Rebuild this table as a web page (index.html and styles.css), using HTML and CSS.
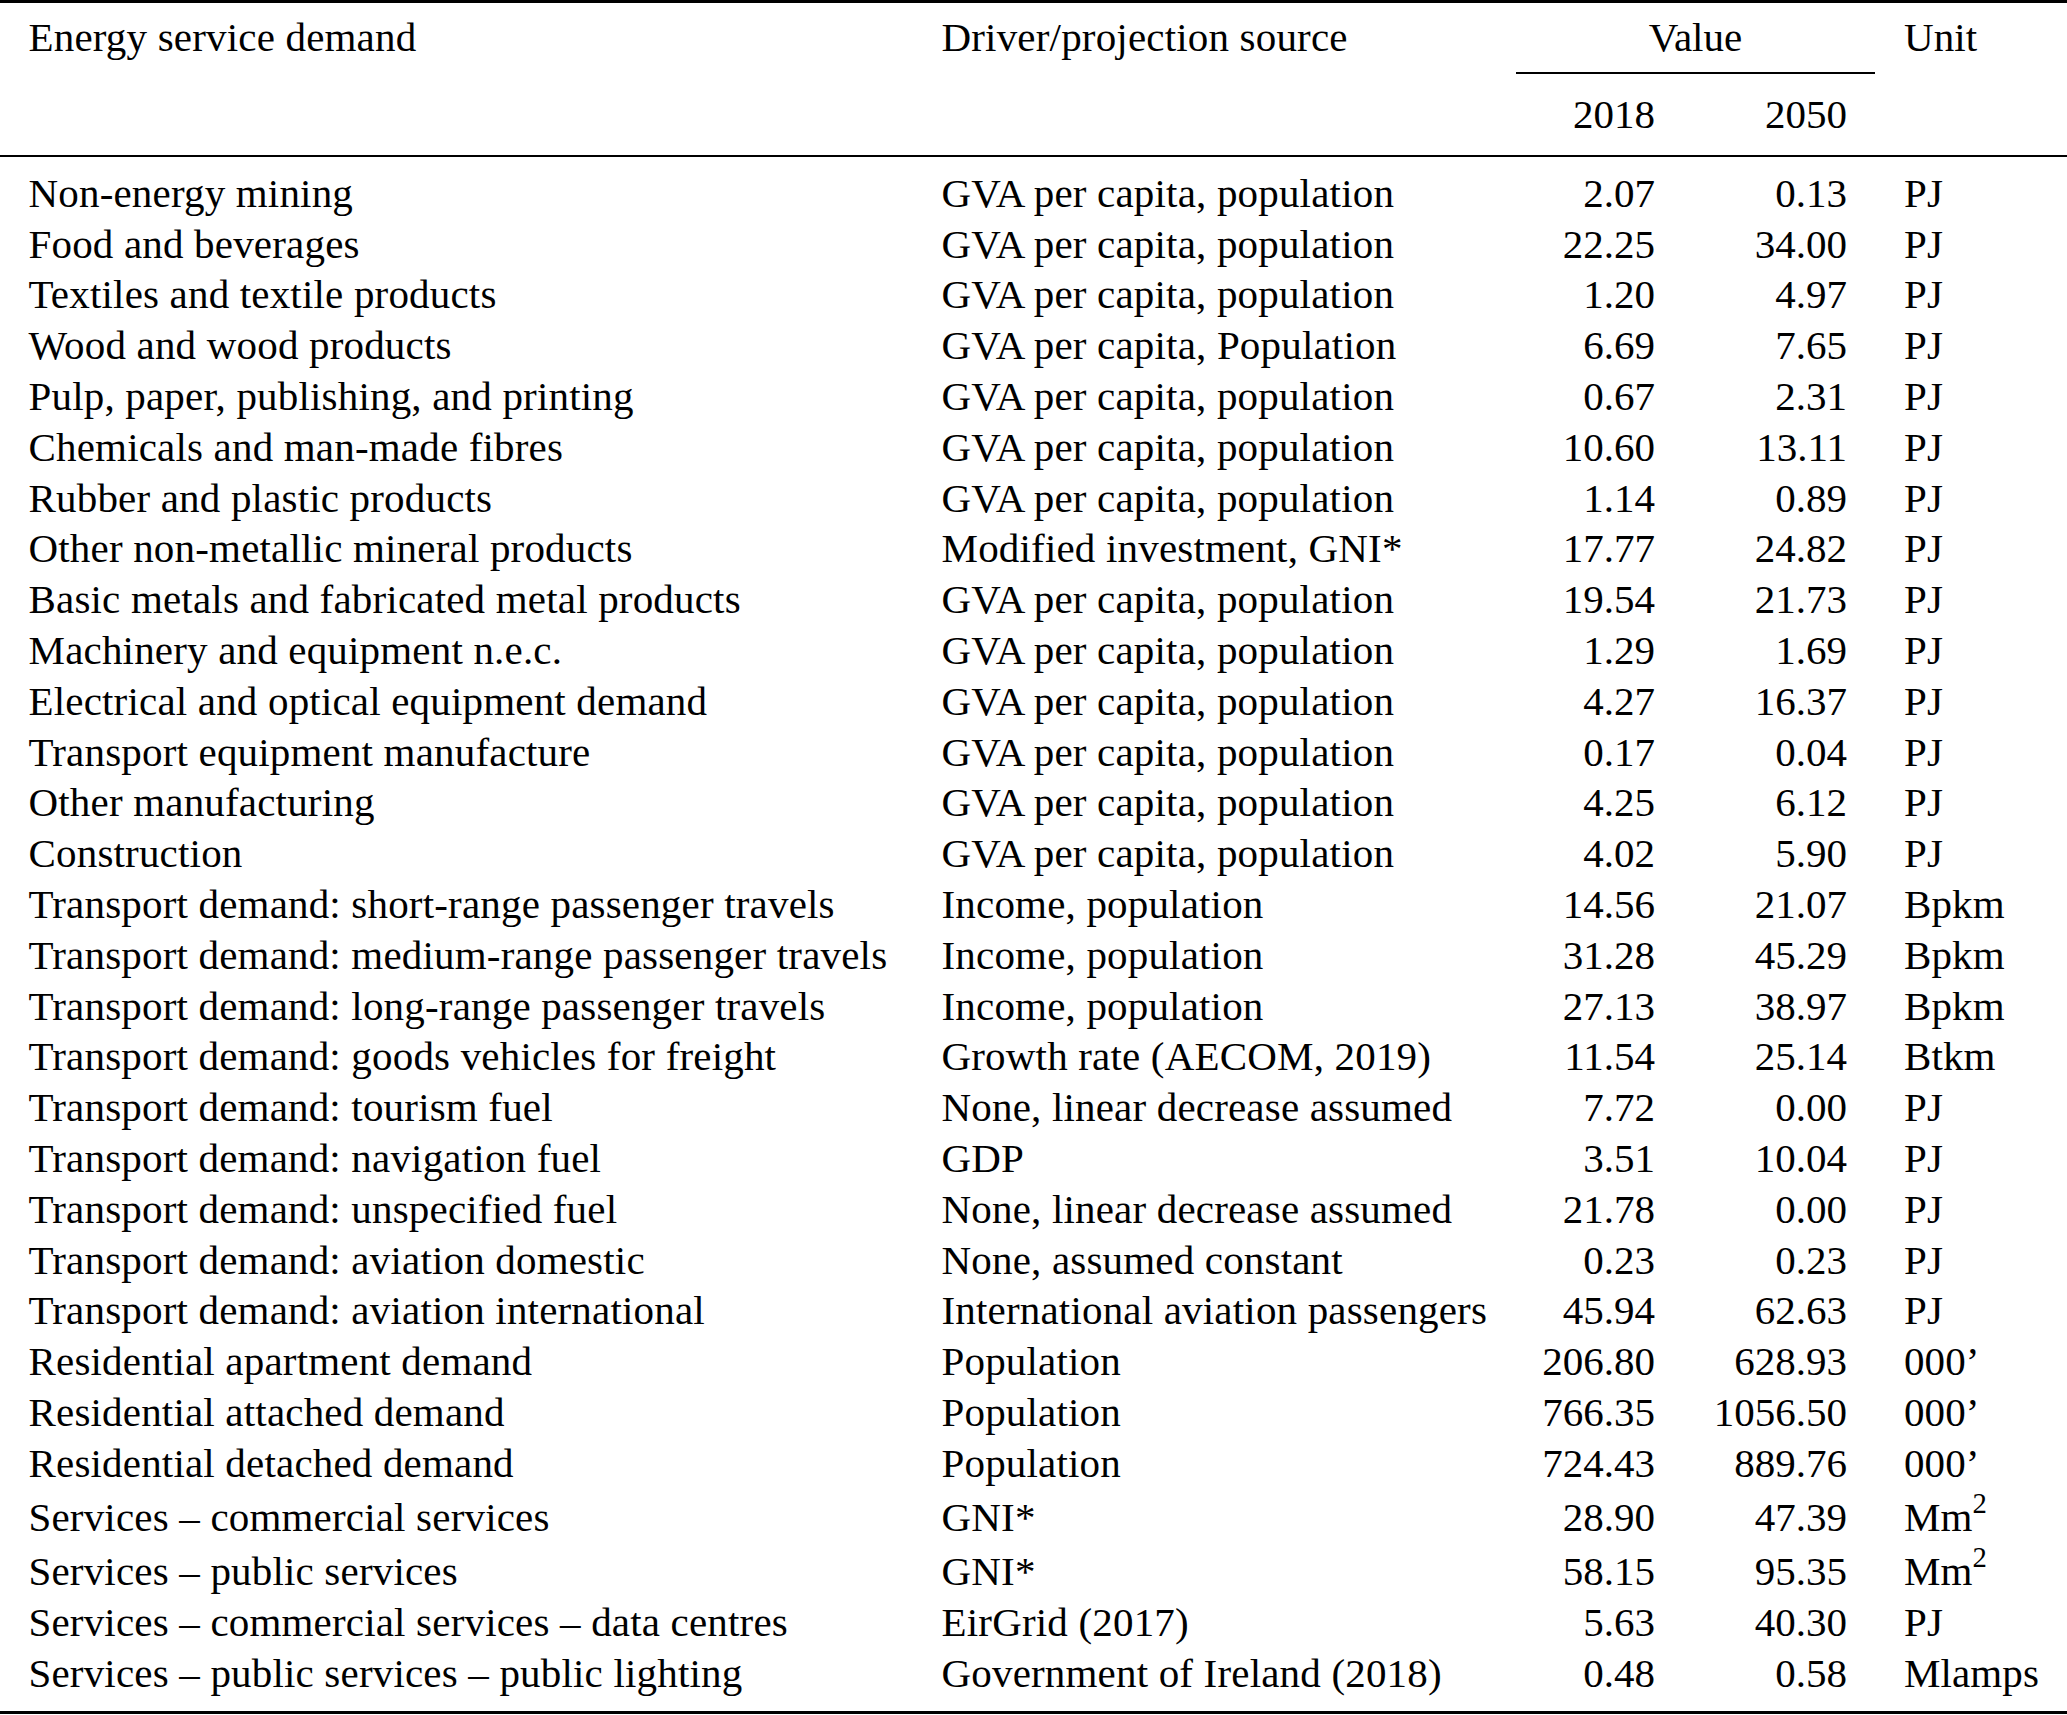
FILE: index.html
```html
<!DOCTYPE html>
<html lang="en">
<head>
<meta charset="utf-8">
<title>Energy service demand</title>
<link rel="stylesheet" href="styles.css">
</head>
<body>
<table class="tbl">
  <colgroup>
    <col class="w1"><col class="w2"><col class="w3"><col class="w4"><col class="w5">
  </colgroup>
  <thead>
    <tr class="h1">
      <th rowspan="2" class="c1 span">Energy service demand</th>
      <th rowspan="2" class="c2 span">Driver/projection source</th>
      <th colspan="2" class="value">Value</th>
      <th rowspan="2" class="c5 span">Unit</th>
    </tr>
    <tr class="h2">
      <th class="num">2018</th>
      <th class="num">2050</th>
    </tr>
  </thead>
  <tbody>
    <tr><td class="c1">Non-energy mining</td><td class="c2">GVA per capita, population</td><td class="num">2.07</td><td class="num">0.13</td><td class="c5">PJ</td></tr>
    <tr><td class="c1">Food and beverages</td><td class="c2">GVA per capita, population</td><td class="num">22.25</td><td class="num">34.00</td><td class="c5">PJ</td></tr>
    <tr><td class="c1">Textiles and textile products</td><td class="c2">GVA per capita, population</td><td class="num">1.20</td><td class="num">4.97</td><td class="c5">PJ</td></tr>
    <tr><td class="c1">Wood and wood products</td><td class="c2">GVA per capita, Population</td><td class="num">6.69</td><td class="num">7.65</td><td class="c5">PJ</td></tr>
    <tr><td class="c1">Pulp, paper, publishing, and printing</td><td class="c2">GVA per capita, population</td><td class="num">0.67</td><td class="num">2.31</td><td class="c5">PJ</td></tr>
    <tr><td class="c1">Chemicals and man-made fibres</td><td class="c2">GVA per capita, population</td><td class="num">10.60</td><td class="num">13.11</td><td class="c5">PJ</td></tr>
    <tr><td class="c1">Rubber and plastic products</td><td class="c2">GVA per capita, population</td><td class="num">1.14</td><td class="num">0.89</td><td class="c5">PJ</td></tr>
    <tr><td class="c1">Other non-metallic mineral products</td><td class="c2">Modified investment, GNI*</td><td class="num">17.77</td><td class="num">24.82</td><td class="c5">PJ</td></tr>
    <tr><td class="c1">Basic metals and fabricated metal products</td><td class="c2">GVA per capita, population</td><td class="num">19.54</td><td class="num">21.73</td><td class="c5">PJ</td></tr>
    <tr><td class="c1">Machinery and equipment n.e.c.</td><td class="c2">GVA per capita, population</td><td class="num">1.29</td><td class="num">1.69</td><td class="c5">PJ</td></tr>
    <tr><td class="c1">Electrical and optical equipment demand</td><td class="c2">GVA per capita, population</td><td class="num">4.27</td><td class="num">16.37</td><td class="c5">PJ</td></tr>
    <tr><td class="c1">Transport equipment manufacture</td><td class="c2">GVA per capita, population</td><td class="num">0.17</td><td class="num">0.04</td><td class="c5">PJ</td></tr>
    <tr><td class="c1">Other manufacturing</td><td class="c2">GVA per capita, population</td><td class="num">4.25</td><td class="num">6.12</td><td class="c5">PJ</td></tr>
    <tr><td class="c1">Construction</td><td class="c2">GVA per capita, population</td><td class="num">4.02</td><td class="num">5.90</td><td class="c5">PJ</td></tr>
    <tr><td class="c1">Transport demand: short-range passenger travels</td><td class="c2">Income, population</td><td class="num">14.56</td><td class="num">21.07</td><td class="c5">Bpkm</td></tr>
    <tr><td class="c1">Transport demand: medium-range passenger travels</td><td class="c2">Income, population</td><td class="num">31.28</td><td class="num">45.29</td><td class="c5">Bpkm</td></tr>
    <tr><td class="c1">Transport demand: long-range passenger travels</td><td class="c2">Income, population</td><td class="num">27.13</td><td class="num">38.97</td><td class="c5">Bpkm</td></tr>
    <tr><td class="c1">Transport demand: goods vehicles for freight</td><td class="c2">Growth rate (AECOM, 2019)</td><td class="num">11.54</td><td class="num">25.14</td><td class="c5">Btkm</td></tr>
    <tr><td class="c1">Transport demand: tourism fuel</td><td class="c2">None, linear decrease assumed</td><td class="num">7.72</td><td class="num">0.00</td><td class="c5">PJ</td></tr>
    <tr><td class="c1">Transport demand: navigation fuel</td><td class="c2">GDP</td><td class="num">3.51</td><td class="num">10.04</td><td class="c5">PJ</td></tr>
    <tr><td class="c1">Transport demand: unspecified fuel</td><td class="c2">None, linear decrease assumed</td><td class="num">21.78</td><td class="num">0.00</td><td class="c5">PJ</td></tr>
    <tr><td class="c1">Transport demand: aviation domestic</td><td class="c2">None, assumed constant</td><td class="num">0.23</td><td class="num">0.23</td><td class="c5">PJ</td></tr>
    <tr><td class="c1">Transport demand: aviation international</td><td class="c2">International aviation passengers</td><td class="num">45.94</td><td class="num">62.63</td><td class="c5">PJ</td></tr>
    <tr><td class="c1">Residential apartment demand</td><td class="c2">Population</td><td class="num">206.80</td><td class="num">628.93</td><td class="c5">000’</td></tr>
    <tr><td class="c1">Residential attached demand</td><td class="c2">Population</td><td class="num">766.35</td><td class="num">1056.50</td><td class="c5">000’</td></tr>
    <tr><td class="c1">Residential detached demand</td><td class="c2">Population</td><td class="num">724.43</td><td class="num">889.76</td><td class="c5">000’</td></tr>
    <tr class="sup-row"><td class="c1">Services – commercial services</td><td class="c2">GNI*</td><td class="num">28.90</td><td class="num">47.39</td><td class="c5">Mm<sup class="sup">2</sup></td></tr>
    <tr class="sup-row"><td class="c1">Services – public services</td><td class="c2">GNI*</td><td class="num">58.15</td><td class="num">95.35</td><td class="c5">Mm<sup class="sup">2</sup></td></tr>
    <tr><td class="c1">Services – commercial services – data centres</td><td class="c2">EirGrid (2017)</td><td class="num">5.63</td><td class="num">40.30</td><td class="c5">PJ</td></tr>
    <tr><td class="c1">Services – public services – public lighting</td><td class="c2">Government of Ireland (2018)</td><td class="num">0.48</td><td class="num">0.58</td><td class="c5">Mlamps</td></tr>
  </tbody>
</table>
</body>
</html>
```

FILE: styles.css
```css
html, body {
  margin: 0;
  padding: 0;
  background: #ffffff;
}

.tbl {
  width: 2067px;
  table-layout: fixed;
  border-collapse: separate;
  border-spacing: 0;
  font-family: "Liberation Serif", "Times New Roman", serif;
  font-size: 41px;
  line-height: 50.8px;
  color: #000000;
  border-top: 3px solid #000000;
  border-bottom: 3px solid #000000;
}

.w1 { width: 913px; }
.w2 { width: 603px; }
.w3 { width: 167px; }
.w4 { width: 192px; }
.w5 { width: 192px; }

.tbl th,
.tbl td {
  padding: 0;
  font-weight: normal;
  text-align: left;
  vertical-align: top;
  white-space: nowrap;
}

.tbl .c1 { padding-left: 28.5px; letter-spacing: 0.18px; }
.tbl .c2 { padding-left: 28.5px; letter-spacing: 0.18px; }
.tbl .num { text-align: right; padding-right: 28px; }
.tbl .c5 { padding-left: 29px; letter-spacing: 0.1px; }

.tbl .h1 th {
  padding-top: 9px;
}

.tbl .h1 .value {
  text-align: center;
  padding-bottom: 9px;
  border-bottom: 2px solid #000000;
}

.tbl .h2 th {
  padding-top: 15.5px;
  padding-bottom: 14.7px;
}

.tbl .h2 th,
.tbl .h1 .span {
  border-bottom: 2px solid #000000;
}

.tbl tbody tr:first-child td {
  padding-top: 11px;
}

.tbl tbody tr:last-child td {
  padding-bottom: 13px;
}

.tbl .sup-row td {
  padding-top: 3.4px;
}

.sup {
  font-size: 0.7em;
  line-height: 0;
  vertical-align: 18px;
}
```
